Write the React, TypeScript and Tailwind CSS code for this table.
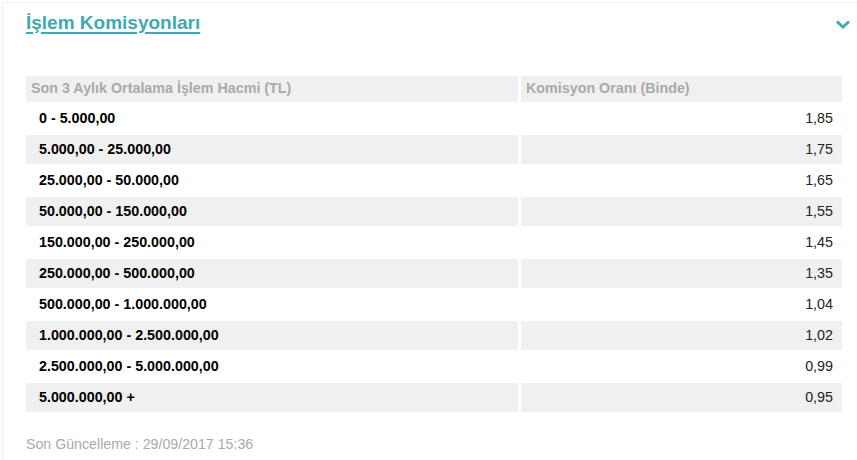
import React from 'react';

const rows: [string, string][] = [
  ['0 - 5.000,00', '1,85'],
  ['5.000,00 - 25.000,00', '1,75'],
  ['25.000,00 - 50.000,00', '1,65'],
  ['50.000,00 - 150.000,00', '1,55'],
  ['150.000,00 - 250.000,00', '1,45'],
  ['250.000,00 - 500.000,00', '1,35'],
  ['500.000,00 - 1.000.000,00', '1,04'],
  ['1.000.000,00 - 2.500.000,00', '1,02'],
  ['2.500.000,00 - 5.000.000,00', '0,99'],
  ['5.000.000,00 +', '0,95'],
];

export default function App() {
  return (
    <div
      className="w-[857px] h-[460px] bg-white overflow-hidden pt-[2px] pl-[2px]"
      style={{ fontFamily: '"Liberation Sans", Arial, sans-serif' }}
    >
      <div className="h-full border-t border-l border-[#f2f2f2] pl-[23px] pr-[15px]">
        {/* Title bar */}
        <div className="flex items-center justify-between h-[38px]">
          <a
            href="#"
            className="text-[19px] font-bold text-[#3fa9b0] underline underline-offset-[3px] decoration-[2px] leading-none"
          >
            İşlem Komisyonları
          </a>
          <svg width="16" height="11" viewBox="0 0 16 11" className="-mr-[9px] mt-[4px]">
            <path d="M2 2.5 L8 8 L14 2.5" fill="none" stroke="#3fa9b0" strokeWidth="2.8" />
          </svg>
        </div>

        {/* Table */}
        <div className="mt-[35px] grid grid-cols-[492px_1fr] gap-x-[3px] gap-y-[2px] text-[14.3px]">
          <div className="h-[26px] bg-[#f0f0f0] pl-[5px] flex items-center font-bold text-[#aaaaaa]">
            Son 3 Aylık Ortalama İşlem Hacmi (TL)
          </div>
          <div className="h-[26px] bg-[#f0f0f0] pl-[5px] flex items-center font-bold text-[#aaaaaa]">
            Komisyon Oranı (Binde)
          </div>
          {rows.map(([range, rate], i) => {
            const bg = i % 2 === 1 ? 'bg-[#f0f0f0]' : 'bg-white';
            return (
              <React.Fragment key={range}>
                <div className={`h-[29px] ${bg} pl-[13px] flex items-center font-bold text-black`}>
                  {range}
                </div>
                <div className={`h-[29px] ${bg} pr-[9px] flex items-center justify-end text-[#222]`}>
                  {rate}
                </div>
              </React.Fragment>
            );
          })}
        </div>

        <div className="mt-[22px] text-[14.2px] text-[#aaaaaa]">
          Son Güncelleme : 29/09/2017 15:36
        </div>
      </div>
    </div>
  );
}
